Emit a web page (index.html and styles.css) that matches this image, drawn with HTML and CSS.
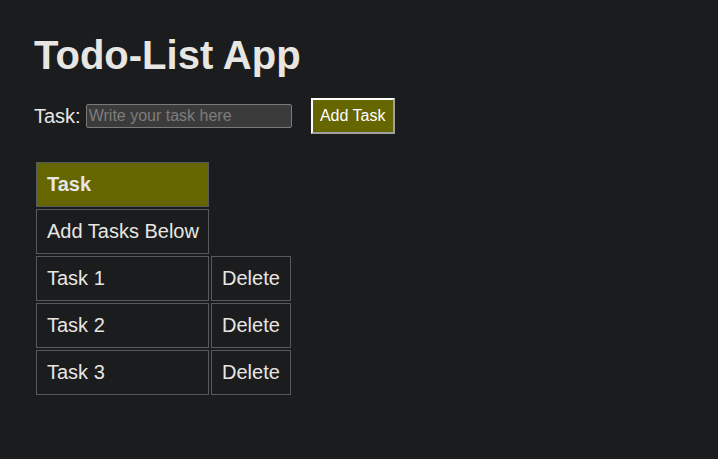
FILE: index.html
```html
<!DOCTYPE html>
<html>
<head>
<meta charset="utf-8">
<link rel="stylesheet" href="styles.css">
</head>
<body>
<div class="app">
  <h1 class="title">Todo-List App</h1>
  <div class="form-row">
    <label class="label" for="task">Task:</label>
    <input class="task-input" id="task" type="text" placeholder="Write your task here">
    <button class="add-btn">Add Task</button>
  </div>
  <table class="tasks">
    <colgroup><col class="col-task"><col class="col-action"></colgroup>
    <tr><th class="head">Task</th></tr>
    <tr><td class="cell">Add Tasks Below</td></tr>
    <tr><td class="cell">Task 1</td><td class="cell">Delete</td></tr>
    <tr><td class="cell">Task 2</td><td class="cell">Delete</td></tr>
    <tr><td class="cell">Task 3</td><td class="cell">Delete</td></tr>
  </table>
</div>
</body>
</html>
```
FILE: styles.css
```css
html, body {
  margin: 0;
  padding: 0;
  background: #1b1c1e;
  color: #e8e6e3;
  font-family: "Liberation Sans", Arial, sans-serif;
}
.app {
  padding: 32px 34px;
}
.title {
  margin: 0;
  font-size: 40px;
  font-weight: bold;
  line-height: 46px;
}
.form-row {
  display: flex;
  align-items: center;
  margin-top: 20px;
  height: 36px;
}
.label {
  font-size: 20px;
  margin-right: 5px;
}
.task-input {
  box-sizing: border-box;
  width: 206px;
  height: 24px;
  margin: 0;
  padding: 1px 2px;
  background: #3b3b3b;
  border: 1px solid #7a7a7a;
  border-radius: 2px;
  color: #e8e6e3;
  font-family: "Liberation Sans", Arial, sans-serif;
  font-size: 16px;
}
.task-input::placeholder {
  color: #7d7d7d;
}
.add-btn {
  box-sizing: border-box;
  margin-left: 19px;
  height: 36px;
  width: 84px;
  padding: 0 5px;
  background: #666600;
  color: #ffffff;
  border: 2px solid;
  border-color: #ffffff #a0a0a0 #a0a0a0 #ffffff;
  font-family: "Liberation Sans", Arial, sans-serif;
  font-size: 16px;
}
.tasks {
  margin-top: 26px;
  border-collapse: separate;
  border-spacing: 2px;
  font-size: 20px;
  table-layout: fixed;
  width: 259px;
}
.col-task {
  width: 173px;
}
.col-action {
  width: 80px;
}
.head, .cell {
  border: 1px solid #545b5e;
  padding: 10px;
  line-height: 23px;
  text-align: left;
  white-space: nowrap;
}
.head {
  background: #666600;
  font-weight: bold;
}
```
